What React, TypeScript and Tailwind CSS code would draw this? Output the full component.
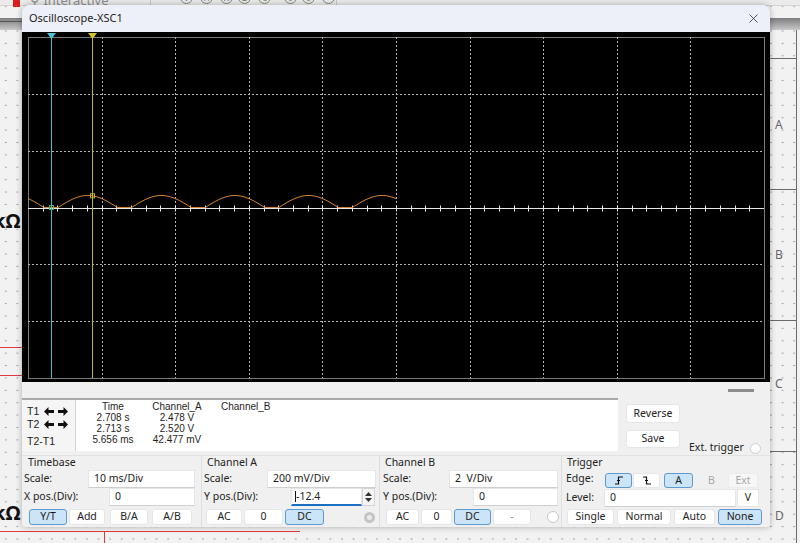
import { X } from 'lucide-react';

const ui = "font-['Noto_Sans',sans-serif]";
const mono = "font-['Liberation_Sans',Arial,sans-serif]";

// screen geometry (px, relative to the black area)
const L = 6;
const R = 742;
const T = 5;
const B = 346;
const DX = (R - L) / 10;
const DY = (B - T) / 6;
const AXIS = T + DY * 3;

function traceY(x: number) {
  const period = 73.6;
  const hump = 59.5;
  const p = (((x - 36) % period) + period) % period;
  if (p < hump) return AXIS - 12 * Math.sin((Math.PI * p) / hump);
  return AXIS;
}

function Screen() {
  const vx = Array.from({ length: 9 }, (_, i) => Math.round(L + DX * (i + 1)) + 0.5);
  const hy = [1, 2, 4, 5].map((k) => Math.round(T + DY * k) + 0.5);
  const ticks = Array.from({ length: 49 }, (_, i) => Math.round(L + (DX / 5) * (i + 1)) + 0.5);
  const ay = Math.round(AXIS) + 0.5;
  const pts: string[] = [];
  for (let x = 6; x <= 374; x += 1) pts.push(`${x},${traceY(x).toFixed(2)}`);

  return (
    <svg width={748} height={350} className="block">
      <rect x={L + 0.5} y={T + 0.5} width={R - L} height={B - T} fill="none" stroke="#7c7c7c" />
      {vx.map((x) => (
        <line key={x} x1={x} x2={x} y1={T} y2={B} stroke="#b4b4b4" strokeDasharray="2 2" />
      ))}
      {hy.map((y) => (
        <line key={y} x1={L} x2={R} y1={y} y2={y} stroke="#b4b4b4" strokeDasharray="2 2" />
      ))}
      <line x1={L} x2={R} y1={ay} y2={ay} stroke="#e6e6e6" />
      {ticks.map((x) => (
        <line key={x} x1={x} x2={x} y1={ay - 3} y2={ay + 3} stroke="#e6e6e6" />
      ))}
      <polyline points={pts.join(' ')} fill="none" stroke="#d3832f" strokeWidth={1} />

      {/* cursor 1 */}
      <line x1={29.5} x2={29.5} y1={T} y2={B} stroke="#49bccb" />
      <path d="M25 1 L34 1 L29.5 7 Z" fill="#49c6d6" />
      <rect x={27.5} y={AXIS - 2} width={4} height={4} fill="none" stroke="#3fae6a" />
      {/* cursor 2 */}
      <line x1={70.5} x2={70.5} y1={T} y2={B} stroke="#c0b422" />
      <path d="M66 1 L75 1 L70.5 7 Z" fill="#d4c62a" />
      <rect x={68.5} y={traceY(70) - 2} width={4} height={4} fill="none" stroke="#c0b422" />
    </svg>
  );
}

function Btn({
  label,
  w,
  active,
  disabled,
  className = '',
  children,
}: {
  label?: string;
  w: number;
  active?: boolean;
  disabled?: boolean;
  className?: string;
  children?: React.ReactNode;
}) {
  const tone = active
    ? 'bg-[#cce4f7] border-[#5e9ad2] text-[#1a1a1a]'
    : disabled
      ? 'bg-[#f7f7f7] border-[#ececec] text-[#a8a8a8]'
      : 'bg-white border-[#e6e6e6] text-[#222]';
  return (
    <div
      style={{ width: w }}
      className={`h-full flex items-center justify-center border rounded-[3px] text-[10.5px] ${tone} ${className}`}
    >
      {children ?? label}
    </div>
  );
}

function Field({ w, value, className = '' }: { w: number; value: string; className?: string }) {
  return (
    <div
      style={{ width: w }}
      className={`h-[18px] bg-white border border-[#e6e6e6] border-b-[#cfcfcf] flex items-center pl-[5px] text-[10.5px] text-[#1a1a1a] whitespace-pre ${className}`}
    >
      {value}
    </div>
  );
}

function Arrows() {
  return (
    <div className="flex items-center gap-[4px] ml-auto mr-[7px]">
      <svg width="10" height="9" viewBox="0 0 10 9">
        <path d="M0 4.5 L4.5 0 L4.5 3 L10 3 L10 6 L4.5 6 L4.5 9 Z" fill="#111" />
      </svg>
      <svg width="10" height="9" viewBox="0 0 10 9">
        <path d="M10 4.5 L5.5 0 L5.5 3 L0 3 L0 6 L5.5 6 L5.5 9 Z" fill="#111" />
      </svg>
    </div>
  );
}

function Readout() {
  const rows = [
    ['Time', 'Channel_A', 'Channel_B'],
    ['2.708 s', '2.478 V', ''],
    ['2.713 s', '2.520 V', ''],
    ['5.656 ms', '42.477 mV', ''],
  ];
  return (
    <div className="flex h-[53px]">
      <div className="w-[596px] flex border-t-2 border-[#a9a9a9]">
        <div className={`w-[54px] bg-[#f5f5f5] border-r border-[#d6d6d6] pt-[5px] ${mono} text-[10.5px] text-[#222]`}>
          <div className="h-[13px] flex items-center pl-[5px]">
            T1
            <Arrows />
          </div>
          <div className="h-[13px] flex items-center pl-[5px]">
            T2
            <Arrows />
          </div>
          <div className="h-[13px] mt-[4px] flex items-center pl-[5px]">T2-T1</div>
        </div>
        <div className={`flex-1 bg-white pt-[1.5px] ${mono} text-[10px] text-[#1e1e1e]`}>
          {rows.map((r, i) => (
            <div key={i} className="h-[11px] flex items-center leading-none">
              <div className="w-[60px] ml-[7px] text-center">{r[0]}</div>
              <div className="w-[60px] ml-[4px] text-center">{r[1]}</div>
              <div className="ml-[14px]">{r[2]}</div>
            </div>
          ))}
        </div>
      </div>
      <div className="ml-[8px] pt-[6px] flex flex-col gap-[7px]">
        <div className="h-[19px]">
          <Btn label="Reverse" w={54} />
        </div>
        <div className="h-[18px]">
          <Btn label="Save" w={54} />
        </div>
      </div>
      <div className={`ml-[9px] mt-[43px] h-[14px] flex items-center text-[10.5px] text-[#222] ${ui}`}>
        Ext. trigger
        <div className="ml-[6px] w-[11px] h-[11px] rounded-full bg-white border border-[#cdcdcd]" />
      </div>
    </div>
  );
}

function GroupTitle({ text, pl }: { text: string; pl: number }) {
  return (
    <div style={{ paddingLeft: pl }} className="h-[14px] flex items-center text-[10.5px] text-[#222]">
      {text}
    </div>
  );
}

function Controls() {
  return (
    <div className={`mt-[4px] h-[72px] flex border-t border-[#e2e2e2] ${ui} text-[#222]`}>
      {/* Timebase */}
      <div className="w-[180px] border-r border-[#dedede]">
        <GroupTitle text="Timebase" pl={6} />
        <div className="h-[18px] flex items-center text-[10.5px]">
          <div className="w-[66px] pl-[2px]">Scale:</div>
          <Field w={107} value="10 ms/Div" />
        </div>
        <div className="h-[18px] flex items-center text-[10.5px]">
          <div className="w-[87px] pl-[2px]">X pos.(Div):</div>
          <Field w={86} value="0" />
        </div>
        <div className="h-[16px] mt-[3px] flex pl-[7px]">
          <Btn label="Y/T" w={38} active />
          <Btn label="Add" w={36} className="ml-[2px]" />
          <Btn label="B/A" w={38} className="ml-[5px]" />
          <Btn label="A/B" w={40} className="ml-[4px]" />
        </div>
      </div>

      {/* Channel A */}
      <div className="w-[178px] border-r border-[#dedede]">
        <GroupTitle text="Channel A" pl={5} />
        <div className="h-[18px] flex items-center text-[10.5px]">
          <div className="w-[65px] pl-[2px]">Scale:</div>
          <Field w={109} value="200 mV/Div" />
        </div>
        <div className="h-[18px] flex items-center text-[10.5px]">
          <div className="w-[89px] pl-[2px]">Y pos.(Div):</div>
          <div className="w-[71px] h-[18px] bg-white border border-[#e6e6e6] border-b-2 border-b-[#1a6fc4] flex items-center pl-[3px]">
            <span className="w-px h-[11px] bg-[#111]" />
            <span>-12.4</span>
          </div>
          <div className="w-[13px] h-[18px] bg-[#f4f4f4] border border-[#d4d4d4] flex flex-col items-center justify-center gap-[2px]">
            <svg width="7" height="4" viewBox="0 0 7 4">
              <path d="M0 4 L3.5 0 L7 4 Z" fill="#333" />
            </svg>
            <svg width="7" height="4" viewBox="0 0 7 4">
              <path d="M0 0 L3.5 4 L7 0 Z" fill="#333" />
            </svg>
          </div>
        </div>
        <div className="h-[16px] mt-[3px] flex pl-[4px] items-center">
          <Btn label="AC" w={36} />
          <Btn label="0" w={39} className="ml-[2px]" />
          <Btn label="DC" w={39} active className="ml-[2px]" />
          <div className="ml-[40px] w-[11px] h-[11px] rounded-full border-[3px] border-[#c4c4c4] bg-[#ececec]" />
        </div>
      </div>

      {/* Channel B */}
      <div className="w-[182px] border-r border-[#dedede]">
        <GroupTitle text="Channel B" pl={5} />
        <div className="h-[18px] flex items-center text-[10.5px]">
          <div className="w-[69px] pl-[3px]">Scale:</div>
          <Field w={109} value="2  V/Div" />
        </div>
        <div className="h-[18px] flex items-center text-[10.5px]">
          <div className="w-[93px] pl-[3px]">Y pos.(Div):</div>
          <Field w={85} value="0" />
        </div>
        <div className="h-[16px] mt-[3px] flex pl-[6px] items-center">
          <Btn label="AC" w={33} />
          <Btn label="0" w={31} className="ml-[2px]" />
          <Btn label="DC" w={37} active className="ml-[2px]" />
          <Btn label="-" w={38} className="ml-[2px] text-[#888]" />
          <div className="ml-[16px] w-[12px] h-[12px] rounded-full border border-[#c8c8c8] bg-white" />
        </div>
      </div>

      {/* Trigger */}
      <div className="flex-1">
        <GroupTitle text="Trigger" pl={5} />
        <div className="h-[18px] flex items-end text-[10.5px]">
          <div className="w-[43px] pl-[4px] self-center">Edge:</div>
          <div className="h-[15px] flex">
            <Btn w={27} active>
              <svg width="10" height="9" viewBox="0 0 10 9">
                <path d="M1 8 H4.5 V1 H9 M3 4.5 H6" fill="none" stroke="#111" strokeWidth="1.2" />
              </svg>
            </Btn>
            <Btn w={27} className="ml-[1px]">
              <svg width="10" height="9" viewBox="0 0 10 9">
                <path d="M1 1 H4.5 V8 H9 M3 4.5 H6" fill="none" stroke="#111" strokeWidth="1.2" />
              </svg>
            </Btn>
            <Btn label="A" w={29} active className="ml-[4px]" />
            <Btn label="B" w={29} disabled className="ml-[4px] border-transparent bg-transparent" />
            <Btn label="Ext" w={30} disabled className="ml-[2px]" />
          </div>
        </div>
        <div className="h-[18px] flex items-center text-[10.5px] mt-[1px]">
          <div className="w-[42px] pl-[4px]">Level:</div>
          <Field w={132} value="0" />
          <div className="ml-[1px] w-[22px] h-[18px] bg-white border border-[#e6e6e6] flex items-center justify-center">V</div>
        </div>
        <div className="h-[16px] mt-[2px] flex pl-[5px]">
          <Btn label="Single" w={47} />
          <Btn label="Normal" w={54} className="ml-[3px]" />
          <Btn label="Auto" w={41} className="ml-[3px]" />
          <Btn label="None" w={44} active className="ml-[3px]" />
        </div>
      </div>
    </div>
  );
}

function Toolbar() {
  const icons = [
    { x: 180, t: 'V' },
    { x: 200, t: 'A' },
    { x: 220, t: 'W' },
    { x: 238, t: 'Σ' },
    { x: 258, t: 'C' },
    { x: 284, t: 'θ' },
    { x: 302, t: 'θ' },
    { x: 322, t: '•' },
  ];
  return (
    <div className="absolute left-0 top-[-10px] w-full h-[16px] bg-[#ebebeb] border-b border-[#d4d4d4]">
      <div className="absolute left-[13px] top-[10px] w-[7px] h-[7px] bg-[#d81e1e]" />
      <div className={`absolute left-[30px] top-[1px] text-[13px] text-[#8e8e8e] ${ui}`}>⚲ Interactive</div>
      <div className="absolute left-[150px] top-0 w-px h-full bg-[#c8c8c8]" />
      <div className="absolute left-[336px] top-0 w-px h-full bg-[#c8c8c8]" />
      {icons.map((ic) => (
        <div
          key={ic.x}
          style={{ left: ic.x }}
          className={`absolute top-[1px] w-[13px] h-[13px] rounded-full border border-[#7f8f78] text-[8px] text-[#6f7f68] flex items-center justify-center ${ui}`}
        >
          {ic.t}
        </div>
      ))}
    </div>
  );
}

function Canvas() {
  const rulerLines = [58, 189, 320, 451];
  const letters = [
    { y: 124, t: 'A' },
    { y: 254, t: 'B' },
    { y: 383, t: 'C' },
    { y: 515, t: 'D' },
  ];
  return (
    <>
      <div className="absolute left-0 top-[18px] w-full h-[12px] bg-gradient-to-b from-[#7e7e7e] to-[#c9c9c9]" />
      <div className="absolute left-0 top-[21px] w-[22px] h-px bg-[#555]" />
      <div className="absolute left-[796px] top-[30px] w-px h-[513px] bg-[#6a6a6a]" />
      {rulerLines.map((y) => (
        <div key={y} style={{ top: y }} className="absolute left-[770px] w-[27px] h-px bg-[#6a6a6a]" />
      ))}
      {letters.map((l) => (
        <div
          key={l.t}
          style={{ top: l.y - 8 }}
          className={`absolute left-[775px] text-[12px] text-[#666] ${ui}`}
        >
          {l.t}
        </div>
      ))}
      <div className={`absolute left-[-7px] top-[206px] text-[20px] font-bold text-[#111] ${ui}`}>kΩ</div>
      <div className={`absolute left-[-7px] top-[498px] text-[20px] font-bold text-[#111] ${ui}`}>kΩ</div>
      <div className="absolute left-0 top-[347px] w-[22px] h-px bg-[#e23a3a]" />
      <div className="absolute left-0 top-[375px] w-[22px] h-px bg-[#e23a3a]" />
      <div className="absolute left-0 top-[531px] w-[300px] h-px bg-[#e23a3a]" />
      <div className="absolute left-[104px] top-[531px] w-px h-[12px] bg-[#e23a3a]" />
    </>
  );
}

export default function App() {
  return (
    <div className="relative w-[800px] h-[543px] overflow-hidden bg-[#f2f2f2] bg-[radial-gradient(circle,#a3a3a3_0.7px,transparent_1.1px)] bg-[length:11.6px_12.4px]">
      <Canvas />
      <Toolbar />

      {/* oscilloscope window */}
      <div className="absolute left-[22px] top-[5px] w-[748px] h-[522px] flex flex-col rounded-t-[8px] rounded-b-[4px] overflow-hidden bg-[#f0f0f0] shadow-[0_0_6px_rgba(0,0,0,0.3)]">
        <div className={`h-[27px] shrink-0 bg-[#eef0f9] flex items-center justify-between pl-[7px] pr-[9px] ${ui}`}>
          <span className="text-[11px] text-[#1b1b1b]">Oscilloscope-XSC1</span>
          <X size={15} strokeWidth={1.2} className="text-[#222]" />
        </div>
        <div className="h-[350px] shrink-0 bg-black">
          <Screen />
        </div>
        <div className="h-[145px] shrink-0 flex flex-col">
          <div className="h-[16px] flex justify-end">
            <div className="mt-[7px] mr-[16px] w-[26px] h-[3px] bg-[#8c8c8c]" />
          </div>
          <Readout />
          <Controls />
        </div>
      </div>
    </div>
  );
}
